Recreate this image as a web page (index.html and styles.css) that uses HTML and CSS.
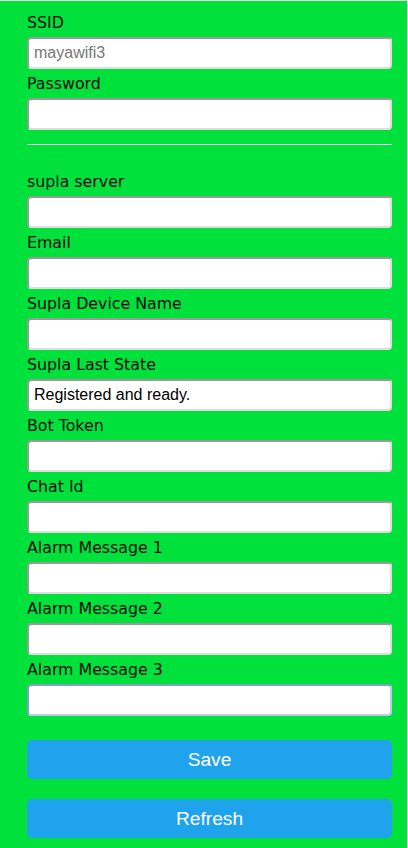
FILE: index.html
```html
<!DOCTYPE html>
<html lang="en">
<head>
<meta charset="utf-8">
<title>Supla WiFi Config</title>
<link rel="stylesheet" href="styles.css">
</head>
<body>
<form class="form">
  <div class="field">
    <label class="label" for="ssid">SSID</label>
    <input class="input" id="ssid" type="text" placeholder="mayawifi3">
  </div>
  <div class="field">
    <label class="label" for="pass">Password</label>
    <input class="input" id="pass" type="password">
  </div>
  <hr class="divider">
  <div class="field">
    <label class="label" for="server">supla server</label>
    <input class="input" id="server" type="text">
  </div>
  <div class="field">
    <label class="label" for="email">Email</label>
    <input class="input" id="email" type="text">
  </div>
  <div class="field">
    <label class="label" for="devname">Supla Device Name</label>
    <input class="input" id="devname" type="text">
  </div>
  <div class="field">
    <label class="label" for="state">Supla Last State</label>
    <input class="input" id="state" type="text" value="Registered and ready.">
  </div>
  <div class="field">
    <label class="label" for="token">Bot Token</label>
    <input class="input" id="token" type="text">
  </div>
  <div class="field">
    <label class="label" for="chat">Chat Id</label>
    <input class="input" id="chat" type="text">
  </div>
  <div class="field">
    <label class="label" for="alarm1">Alarm Message 1</label>
    <input class="input" id="alarm1" type="text">
  </div>
  <div class="field">
    <label class="label" for="alarm2">Alarm Message 2</label>
    <input class="input" id="alarm2" type="text">
  </div>
  <div class="field">
    <label class="label" for="alarm3">Alarm Message 3</label>
    <input class="input input-active" id="alarm3" type="text">
  </div>
  <div class="actions">
    <button class="btn" type="button">Save</button>
    <button class="btn" type="button">Refresh</button>
  </div>
</form>
</body>
</html>
```

FILE: styles.css
```css
html {
  background: #00e13c;
}
body {
  margin: 0;
  min-height: 848px;
  box-sizing: border-box;
  background: #00e13c;
  border-top: 1px solid #e4e4e4;
  border-right: 1px solid #e4e4e4;
  padding: 12px 15px 0 27px;
  font-family: "DejaVu Sans", Verdana, sans-serif;
  font-size: 16px;
  color: #000;
}
.form {
  display: flex;
  flex-direction: column;
}
.field {
  display: flex;
  flex-direction: column;
}
.label {
  display: block;
  line-height: 19px;
  font-size: 15.8px;
  color: #0a0a0a;
}
.input {
  display: block;
  box-sizing: border-box;
  width: 100%;
  height: 32px;
  margin: 5px 0;
  padding: 5px;
  font-family: "Liberation Sans", Arial, sans-serif;
  font-size: 16px;
  color: #000;
  background: #fff;
  border-width: 2px;
  border-style: solid;
  border-color: #9a9a9a #dedede #dedede #9a9a9a;
  border-radius: 4px;
  outline: none;
}
.input::placeholder {
  color: #777;
}
.input-active {
  border-color: #7fa0c8 #b9cde6 #b9cde6 #7fa0c8;
}
.divider {
  margin: 9px 0 27px;
  border: 0;
  border-top: 1px solid #e2f4e5;
  height: 0;
}
.actions {
  display: flex;
  flex-direction: column;
  gap: 20px;
  margin-top: 19px;
}
.btn {
  display: block;
  width: 100%;
  height: 39px;
  border: 0;
  border-radius: 5px;
  background: #1fa3ec;
  color: #fff;
  font-family: "Liberation Sans", Arial, sans-serif;
  font-size: 19.2px;
  line-height: 39px;
  padding: 0;
}
```
